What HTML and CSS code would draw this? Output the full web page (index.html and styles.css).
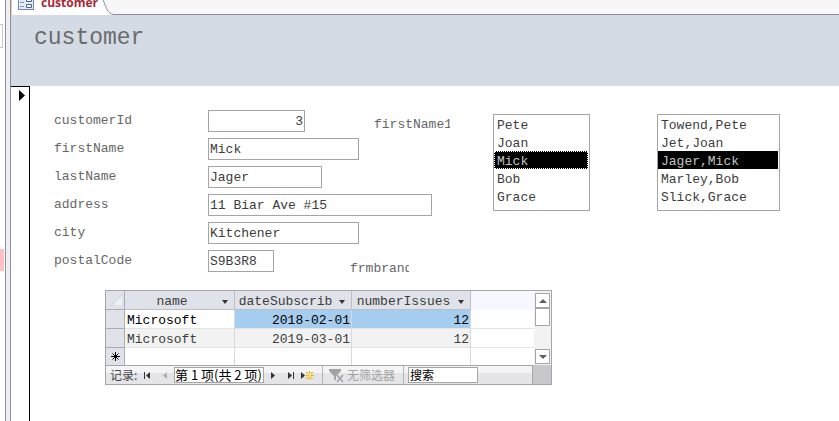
FILE: index.html
```html
<!DOCTYPE html>
<html lang="zh-CN">
<head>
    <meta charset="utf-8">
    <title>customer</title>
    <link rel="stylesheet" href="styles.css">
</head>
<body>
    <aside class="nav-pane">
        <div class="pane-search"></div>
        <div class="pane-item"></div>
    </aside>
    <div class="splitter"></div>
    <main class="window">
        <div class="tab-bar">
            <a class="tab" href="#">
                <svg class="tab-icon" width="16" height="16" viewBox="0 0 16 16">
                    <rect x="0.5" y="0.5" width="15" height="15" fill="#e4ebf6" stroke="#7286ae"/>
                    <path d="M2 5h4M2 8.500h4M2 12.500h4" stroke="#8193b8"/>
                    <path d="M8.500 4.500h5v3h-5zM8.500 10.500h5v3h-5z" fill="#f4f7fc" stroke="#4a6296"/>
                </svg>
                <span>customer</span>
            </a>
            <svg class="tab-edge" width="14" height="15" viewBox="0 0 14 15">
                <path d="M0 0H3C6 6 7 14 13 14.500V15H0z" fill="#fff"/>
                <path d="M3 0C6 6 7 14 14 14.500" fill="none" stroke="#8e8f95"/>
            </svg>
            <div class="tab-rest"></div>
        </div>

        <header class="form-header">
            <h1>customer</h1>
        </header>

        <div class="form-body">
            <div class="record-selector">
                <svg width="6" height="11" viewBox="0 0 6 11"><path d="M0 0l6 5.500L0 11z"/></svg>
            </div>
            <div class="detail">
                <div class="top">
                    <form class="fields">
                        <div class="field">
                            <label for="customerId">customerId</label>
                            <input class="id" type="text" id="customerId" value="3">
                            <label class="caption first-name" for="firstNameList">firstName1</label>
                        </div>
                        <div class="field">
                            <label for="firstName">firstName</label>
                            <input class="medium" type="text" id="firstName" value="Mick">
                        </div>
                        <div class="field">
                            <label for="lastName">lastName</label>
                            <input class="small" type="text" id="lastName" value="Jager">
                        </div>
                        <div class="field">
                            <label for="address">address</label>
                            <input class="large" type="text" id="address" value="11 Biar Ave #15">
                        </div>
                        <div class="field">
                            <label for="city">city</label>
                            <input class="medium" type="text" id="city" value="Kitchener">
                        </div>
                        <div class="field">
                            <label for="postalCode">postalCode</label>
                            <input class="code" type="text" id="postalCode" value="S9B3R8">
                            <span class="caption brand">frmbrand</span>
                        </div>
                    </form>
                    <div class="lists">
                        <select class="list focused" id="firstNameList" size="5">
                            <option>Pete</option>
                            <option>Joan</option>
                            <option selected>Mick</option>
                            <option>Bob</option>
                            <option>Grace</option>
                        </select>
                        <select class="list wide" size="5" aria-label="fullName">
                            <option>Towend,Pete</option>
                            <option>Jet,Joan</option>
                            <option selected>Jager,Mick</option>
                            <option>Marley,Bob</option>
                            <option>Slick,Grace</option>
                        </select>
                    </div>
                </div>

                <section class="subform">
                    <div class="sheet">
                        <table>
                            <thead>
                                <tr>
                                    <th class="sel"><svg width="12" height="12" viewBox="0 0 12 12"><path d="M12 0v12H0z" fill="#eef0f4" stroke="#c9cfd8"/></svg></th>
                                    <th class="name"><div><span>name</span><button type="button" class="drop" aria-label="name"></button></div></th>
                                    <th class="date"><div><span>dateSubscrib</span><button type="button" class="drop" aria-label="dateSubscrib"></button></div></th>
                                    <th class="issues"><div><span>numberIssues</span><button type="button" class="drop" aria-label="numberIssues"></button></div></th>
                                    <th class="rest"></th>
                                </tr>
                            </thead>
                            <tbody>
                                <tr class="current">
                                    <td class="sel"></td>
                                    <td>Microsoft</td>
                                    <td class="num">2018-02-01</td>
                                    <td class="num">12</td>
                                    <td class="rest"></td>
                                </tr>
                                <tr class="alt">
                                    <td class="sel"></td>
                                    <td>Microsoft</td>
                                    <td class="num">2019-03-01</td>
                                    <td class="num">12</td>
                                    <td class="rest"></td>
                                </tr>
                                <tr class="new">
                                    <td class="sel"><svg width="9" height="9" viewBox="0 0 9 9"><path d="M4.500 0v9M0 4.500h9M1.500 1.500l6 6M7.500 1.500l-6 6" stroke="#000"/></svg></td>
                                    <td></td>
                                    <td></td>
                                    <td></td>
                                    <td class="rest"></td>
                                </tr>
                            </tbody>
                        </table>
                        <div class="scrollbar">
                            <button type="button" aria-label="up"><svg width="8" height="4" viewBox="0 0 8 4"><path d="M4 0l4 4H0z"/></svg></button>
                            <div class="thumb"></div>
                            <button type="button" class="down" aria-label="down"><svg width="8" height="4" viewBox="0 0 8 4"><path d="M0 0h8L4 4z"/></svg></button>
                        </div>
                    </div>
                    <div class="record-bar">
                        <div class="record-nav">
                            <label for="record">记录:</label>
                            <button type="button" aria-label="first"><svg width="8" height="7" viewBox="0 0 8 7"><path d="M1 0h1v7H1zM3 3.500L7 0v7z"/></svg></button>
                            <button type="button" class="prev" aria-label="previous"><svg width="8" height="7" viewBox="0 0 8 7"><path d="M2 3.500L6 0v7z"/></svg></button>
                            <input class="record" type="text" id="record" value="第 1 项(共 2 项)">
                            <button type="button" aria-label="next"><svg width="8" height="7" viewBox="0 0 8 7"><path d="M2 0l4 3.500L2 7z"/></svg></button>
                            <button type="button" aria-label="last"><svg width="8" height="7" viewBox="0 0 8 7"><path d="M1 0l4 3.500L1 7zM6 0h1v7H6z"/></svg></button>
                            <button type="button" class="add" aria-label="new"><svg width="13" height="9" viewBox="0 0 13 9"><path d="M0 1l4 3.500L0 8z"/><path d="M6 2h5v5H6z" fill="#f9dc67"/><path d="M5 1h2v1H5zM8 0h1v2H8zM10 1h2v1h-2zM5 4h2v1H5zM10 4h3v1h-3zM5 7h2v1H5zM8 7h1v2H8zM10 7h2v1h-2z" fill="#e5ac2b"/></svg></button>
                            <button type="button" class="filter" disabled>
                                <svg width="16" height="15" viewBox="0 0 16 15"><path d="M0 1h12v2L7 8v5l-2-2V8L0 3z" fill="#a2a2a5"/><path d="M8 7l6 7M14 7l-6 7" stroke="#a2a2a5" stroke-width="1.500"/></svg>
                                <span>无筛选器</span>
                            </button>
                            <input class="search" type="text" value="搜索" aria-label="搜索">
                        </div>
                        <div class="corner"></div>
                    </div>
                </section>
            </div>
        </div>
    </main>
</body>
</html>
```

FILE: styles.css
```css
* {
    box-sizing: border-box;
}

body {
    display: flex;
    height: 100vh;
    margin: 0;
    overflow: hidden;
    background-color: #fff;
    color: #3c3c3c;
    font-family: "Liberation Mono", "Noto Sans CJK SC", monospace;
    font-size: 13px;
}

input,
select,
button {
    margin: 0;
    padding: 0;
    border: none;
    border-radius: 0;
    outline: none;
    background: none;
    color: inherit;
    font: inherit;
}

svg {
    display: block;
}

/* left pane */
.nav-pane {
    flex: none;
    width: 5px;
    padding-top: 24px;
}

.pane-search {
    width: 3px;
    height: 24px;
    border: 1px solid #c8c8c8;
    border-left: none;
}

.pane-item {
    width: 4px;
    height: 22px;
    margin-top: 201px;
    background-color: #ffc0c4;
}

.splitter {
    flex: none;
    width: 6px;
    border: 1px solid #8c919b;
    border-width: 0 1px;
    background-color: #f0eef4;
}

.window {
    display: flex;
    flex: 1;
    flex-direction: column;
    min-width: 0;
}

/* document tab */
.tab-bar {
    display: flex;
    height: 15px;
    overflow: hidden;
}

.tab {
    display: flex;
    align-items: flex-end;
    gap: 7px;
    padding: 0 2px 5px 6px;
    border-left: 1px solid #e8c9a0;
    background-color: #fff;
    color: #a52a35;
    font-family: "Open Sans", sans-serif;
    font-size: 12px;
    font-weight: bold;
    line-height: 14px;
    text-decoration: none;
}

.tab-edge {
    flex: none;
    background-color: #f7f7f7;
}

.tab-rest {
    flex: 1;
    border-bottom: 1px solid #8e8f95;
    background-color: #f7f7f7;
}

.form-header {
    height: 71px;
    padding: 9px 23px;
    background-color: #d5dbe5;
}

.form-header h1 {
    margin: 0;
    color: #6b6b6b;
    font-size: 23px;
    font-weight: normal;
    line-height: 28px;
}

.form-body {
    display: flex;
    flex: 1;
}

.record-selector {
    flex: none;
    width: 19px;
    padding: 3px 0 0 8px;
    border-top: 1px solid #000;
    border-right: 1px solid #000;
}

.detail {
    flex: 1;
    padding: 24px;
}

.top {
    display: flex;
    align-items: flex-start;
}

/* customer fields */
.fields {
    display: flex;
    flex: none;
    flex-direction: column;
    gap: 6px;
    width: 400px;
}

.field {
    display: flex;
    height: 22px;
}

.field label {
    flex: none;
    width: 154px;
    color: #666;
    line-height: 22px;
}

.field input {
    height: 22px;
    padding: 0 1px;
    border: 1px solid #a5a5a5;
}

.field .id {
    width: 97px;
    text-align: right;
}

.field .code {
    width: 66px;
}

.field .small {
    width: 114px;
}

.field .medium {
    width: 151px;
}

.field .large {
    width: 224px;
}

.field .caption {
    height: 28px;
    padding-top: 6px;
    overflow: hidden;
    color: #666;
    line-height: 18px;
}

.field .first-name {
    width: 76px;
    margin-left: 69px;
}

.field .brand {
    width: 59px;
    margin-left: 76px;
    padding-top: 10px;
}

/* list boxes */
.lists {
    display: flex;
    gap: 67px;
    padding: 4px 0 0 39px;
}

.list {
    width: 97px;
    height: 97px;
    padding-right: 1px;
    overflow: hidden;
    border: 1px solid #a5a5a5;
}

.list.wide {
    width: 123px;
}

.list option {
    height: 18px;
    min-height: 18px;
    padding: 3px 3px 0;
    line-height: 15px;
}

.list option:checked {
    background: #000 linear-gradient(#000, #000);
    -webkit-text-fill-color: #c3c3c3;
}

.list.focused option:checked {
    outline: 1px dotted #fff;
    outline-offset: -1px;
}

/* subscriptions datasheet */
.subform {
    width: 447px;
    margin: 18px 0 0 51px;
    border: 1px solid #a5a5ab;
}

.sheet {
    display: flex;
}

.sheet table {
    flex: 1;
    border-collapse: separate;
    border-spacing: 0;
    table-layout: fixed;
    width: 0;
}

.sheet th,
.sheet td {
    height: 19px;
    padding: 3px 1px 0 2px;
    border-right: 1px solid #d9d9d9;
    border-bottom: 1px solid #e4e4e4;
    font-weight: normal;
    line-height: 15px;
    text-align: left;
}

.sheet th {
    border-color: #b9bfc9;
    background-color: #dfe2e8;
}

.sheet .sel {
    width: 19px;
    padding: 0 0 0 5px;
    border-color: #a8adb6;
    background-color: #dfe2e8;
}

.sheet .name {
    width: 110px;
}

.sheet .date {
    width: 117px;
}

.sheet .issues {
    width: 119px;
}

.sheet th div {
    display: flex;
    align-items: center;
    height: 15px;
}

.sheet th span {
    flex: 1;
    text-align: center;
}

.drop {
    width: 0;
    margin: 0 5px;
    border: 3px solid transparent;
    border-top: 4px solid #333;
    border-bottom: none;
}

.sheet .num {
    text-align: right;
}

.current td {
    color: #000;
}

.current .num {
    background-color: #a4cdf0;
}

.alt td {
    background-color: #f2f2f2;
}

.sheet .new td {
    height: 17px;
    border-bottom: none;
}

.sheet .rest {
    border-right: none;
    background-color: #fff;
}

.sheet th.rest {
    border-color: #f7f7ff;
    background-color: #f7f7ff;
}

.scrollbar {
    display: flex;
    flex-direction: column;
    width: 17px;
    padding: 2px 1px 1px;
    background: #f2f2f2;
}

.scrollbar button {
    display: flex;
    align-items: center;
    justify-content: center;
    height: 15px;
    border: 1px solid #a5a5a5;
    background-color: #fff;
    fill: #606060;
}

.scrollbar .down {
    margin-top: auto;
}

.thumb {
    height: 18px;
    border: 1px solid #a5a5a5;
    background-color: #fff;
}

.record-bar {
    display: flex;
    height: 19px;
    color: #444;
    font-family: "Noto Sans CJK SC", sans-serif;
    font-size: 12px;
    line-height: 18px;
}

.record-nav {
    display: flex;
    flex: 1;
    align-items: center;
    padding-left: 4px;
    border-top: 1px solid #a5a5ab;
    border-right: 1px solid #a5a5ab;
    background: linear-gradient(#f4f4f7 40%, #e5e5e9 40%);
}

.record-nav label {
    flex: none;
    width: 28px;
}

.record-nav button {
    display: flex;
    flex: none;
    align-items: center;
    justify-content: center;
    width: 18px;
    fill: #333;
}

.record-nav .prev {
    fill: #b0b0b3;
}

.record-nav .record {
    width: 90px;
    height: 16px;
    border: 1px solid #a5a5a5;
    background-color: #fff;
    color: #000;
    font-size: 13px;
}

.record-nav .add {
    justify-content: flex-start;
    width: 22px;
    padding-left: 1px;
}

.record-nav .filter {
    justify-content: flex-start;
    gap: 2px;
    width: 82px;
    height: 18px;
    padding-left: 6px;
    border: 1px solid #b5b5b9;
    border-width: 0 1px;
    color: #a2a2a5;
}

.filter span {
    white-space: nowrap;
}

.record-nav .search {
    width: 70px;
    height: 16px;
    margin-left: 4px;
    padding-left: 1px;
    border: 1px solid #a5a5a5;
    background-color: #fff;
    color: #000;
}

.corner {
    width: 18px;
    background-color: #c8c8cc;
}
```
